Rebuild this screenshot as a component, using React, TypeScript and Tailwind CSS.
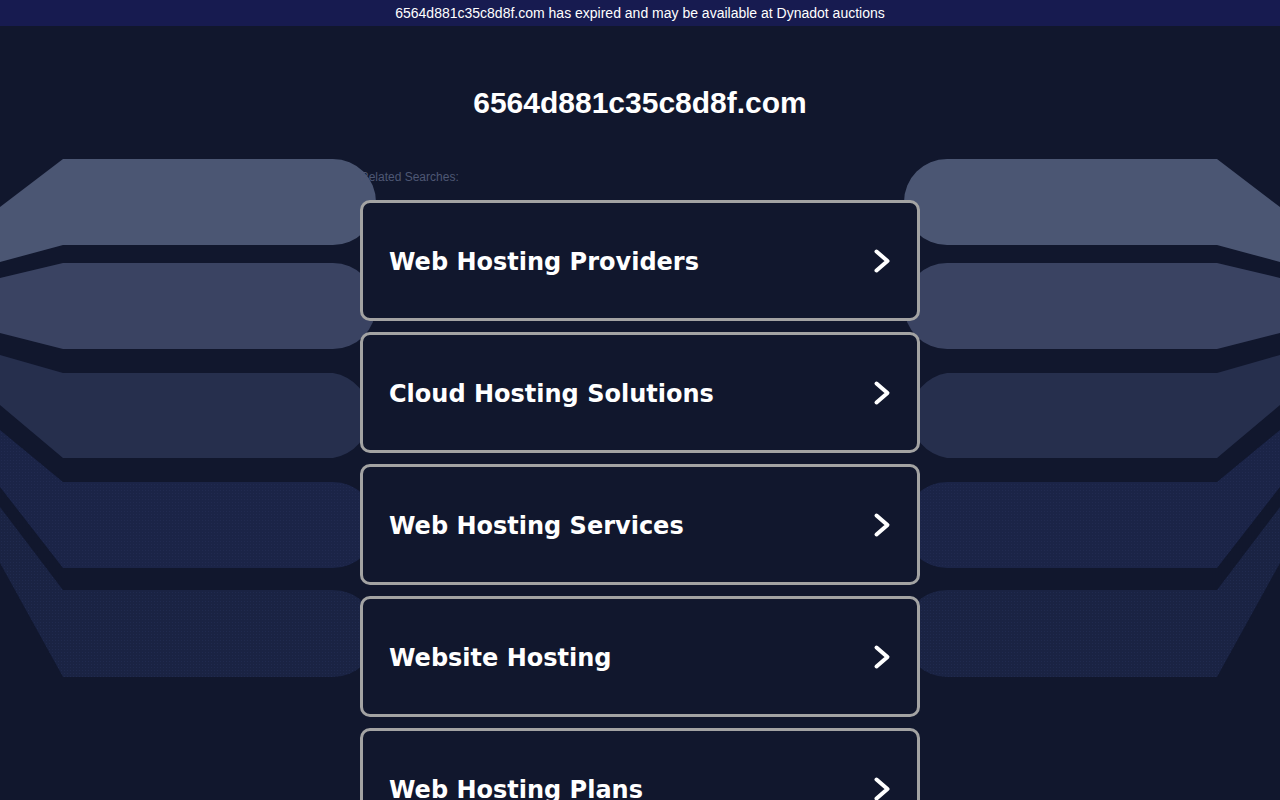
import React from 'react'

const searches = [
  'Web Hosting Providers',
  'Cloud Hosting Solutions',
  'Web Hosting Services',
  'Website Hosting',
  'Web Hosting Plans',
]

// shelves fanning out at the page edges; drawn for the left side, mirrored for the right
const bands = [
  { d: 'M0 207 L63 159 L333 159 A43 43 0 0 1 333 245 L63 245 L0 262 Z', fill: '#4b5673' },
  { d: 'M0 278 L63 263 L333 263 A43 43 0 0 1 333 349 L63 349 L0 333 Z', fill: '#3a4362' },
  { d: 'M0 355 L63 373 L333 373 A43 43 0 0 1 333 458 L63 458 L0 405 Z', fill: '#262f4d' },
  { d: 'M0 430 L63 482 L333 482 A43 43 0 0 1 333 568 L63 568 L0 487 Z', fill: '#1b2447', dots: true },
  { d: 'M0 507 L63 590 L333 590 A43 43 0 0 1 333 677 L63 677 L0 563 Z', fill: '#1a2343', dots: true },
]

function Shelves() {
  return (
    <svg
      className="pointer-events-none absolute left-0 top-0 h-[800px] w-full"
      viewBox="0 0 1280 800"
      preserveAspectRatio="xMidYMin slice"
    >
      <defs>
        <pattern id="dots" width="3" height="3" patternUnits="userSpaceOnUse">
          <rect x="1" y="1" width="1" height="1" fill="#2a3560" opacity="0.35" />
        </pattern>
      </defs>
      {[false, true].map((mirror) => (
        <g key={String(mirror)} transform={mirror ? 'translate(1280 0) scale(-1 1)' : undefined}>
          {bands.map((b, i) => (
            <g key={i}>
              <path d={b.d} fill={b.fill} />
              {b.dots && <path d={b.d} fill="url(#dots)" />}
            </g>
          ))}
        </g>
      ))}
    </svg>
  )
}

function Chevron() {
  return (
    <svg width="18" height="26" viewBox="0 0 18 26" fill="none">
      <polyline
        points="3.5,3.5 14.5,13 3.5,22.5"
        stroke="#ffffff"
        strokeWidth="4"
        strokeLinecap="round"
        strokeLinejoin="round"
      />
    </svg>
  )
}

export default function App() {
  return (
    <div className="relative h-screen overflow-hidden bg-[#11172d] font-['Liberation_Sans',Arial,sans-serif] text-white">
      <Shelves />
      <div className="relative z-10 flex h-[26px] items-center justify-center bg-[#171b50] text-[14px]">
        6564d881c35c8d8f.com has expired and may be available at Dynadot auctions
      </div>

      <div className="relative mx-auto w-[560px]">
        <h1 className="pt-[60px] text-center text-[30px] font-bold leading-[34px]">6564d881c35c8d8f.com</h1>
        <p className="mt-[50px] text-[12px] leading-[14px] text-[#4e5774]">Related Searches:</p>
        <div className="mt-[16px] flex flex-col gap-[11px]">
          {searches.map((s) => (
            <div
              key={s}
              className="flex h-[121px] items-center justify-between rounded-[10px] border-[3px] border-[#a3a3a3] bg-[#11172d] pl-[26px] pr-[26px] pt-[3px]"
            >
              <span className="font-['DejaVu_Sans',Verdana,sans-serif] text-[24px] font-bold">{s}</span>
              <span className="-mt-[3px]">
                <Chevron />
              </span>
            </div>
          ))}
        </div>
      </div>
    </div>
  )
}
